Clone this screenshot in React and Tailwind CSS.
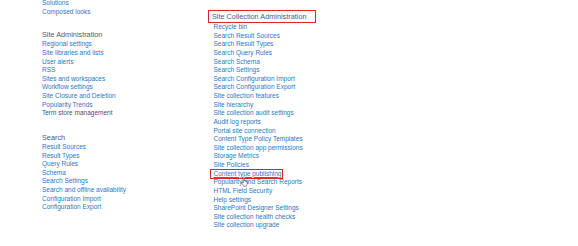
import React from 'react';

const look = ['Solutions', 'Composed looks'];

const siteAdmin = [
  'Regional settings',
  'Site libraries and lists',
  'User alerts',
  'RSS',
  'Sites and workspaces',
  'Workflow settings',
  'Site Closure and Deletion',
  'Popularity Trends',
];

const search = [
  'Result Sources',
  'Result Types',
  'Query Rules',
  'Schema',
  'Search Settings',
  'Search and offline availability',
  'Configuration Import',
  'Configuration Export',
];

const collection = [
  'Recycle bin',
  'Search Result Sources',
  'Search Result Types',
  'Search Query Rules',
  'Search Schema',
  'Search Settings',
  'Search Configuration Import',
  'Search Configuration Export',
  'Site collection features',
  'Site hierarchy',
  'Site collection audit settings',
  'Audit log reports',
  'Portal site connection',
  'Content Type Policy Templates',
  'Site collection app permissions',
  'Storage Metrics',
  'Site Policies',
  'Content type publishing',
  'Popularity and Search Reports',
  'HTML Field Security',
  'Help settings',
  'SharePoint Designer Settings',
  'Site collection health checks',
  'Site collection upgrade',
];

const HandCursor = () => (
  <svg viewBox="0 0 14 18" className="w-[7px] h-[10px]">
    <path
      d="M4.5 1.5Q4.5 0.5 5.5 0.5Q6.5 0.5 6.5 1.5V7Q6.5 6 7.5 6Q8.5 6 8.5 7V7.5Q8.5 6.8 9.5 6.8Q10.5 6.8 10.5 7.8V8.3Q10.5 7.6 11.4 7.6Q12.3 7.6 12.3 8.6V12Q12.3 14.5 11 16V17.5H5.5V16Q4 14.5 2.5 12.5L1 10.3Q0.5 9.3 1.4 8.9Q2.2 8.6 2.9 9.4L4.5 11Z"
      fill="#fff"
      stroke="#222"
      strokeWidth="1"
      strokeLinejoin="round"
    />
  </svg>
);

const LinkList = ({ items }) => (
  <ul className="text-[6.5px] leading-[8.62px] text-[#2a78c4]">
    {items.map((t) => (
      <li key={t} className="whitespace-nowrap">{t}</li>
    ))}
  </ul>
);

const Heading = ({ children }) => (
  <div className="text-[7.3px] leading-[10px] text-[#5a5a5a] whitespace-nowrap">{children}</div>
);

export default function App() {
  return (
    <div
      className="w-[578px] h-[246px] bg-white overflow-hidden flex"
      style={{ fontFamily: '"Liberation Sans", Arial, sans-serif' }}
    >
      <div className="w-[207px] pl-[42px] -mt-[1px] shrink-0">
        <LinkList items={look} />
        <div className="mt-[14px]">
          <Heading>Site Administration</Heading>
          <ul className="text-[6.5px] leading-[8.62px]">
            {siteAdmin.map((t) => (
              <li key={t} className="text-[#2a78c4] whitespace-nowrap">{t}</li>
            ))}
            <li className="text-[#5b3f7e] whitespace-nowrap">Term store management</li>
          </ul>
        </div>
        <div className="mt-[15px]">
          <Heading>Search</Heading>
          <LinkList items={search} />
        </div>
      </div>

      <div className="pt-[10.5px]">
        <div className="ml-[1.5px] mb-[1.5px] w-[106px] h-[11px] outline-[1.5px] outline-[#d9262b] pl-[3.5px] pt-[1.5px] text-[7.3px] leading-[9px] text-[#5a5a5a] whitespace-nowrap">
          Site Collection Administration
        </div>
        <ul className="pl-[6.5px] text-[6.5px] leading-[8.62px] text-[#2a78c4]">
          {collection.map((t) =>
            t === 'Content type publishing' ? (
              <li key={t} className="relative whitespace-nowrap">
                <span className="inline-block -ml-[3px] pl-[3px] pr-[1px] outline-[1.5px] outline-[#d9262b] underline">
                  {t}
                </span>
                <span className="absolute left-[27px] top-[7px]">
                  <HandCursor />
                </span>
              </li>
            ) : (
              <li key={t} className="whitespace-nowrap">{t}</li>
            )
          )}
        </ul>
      </div>
    </div>
  );
}
